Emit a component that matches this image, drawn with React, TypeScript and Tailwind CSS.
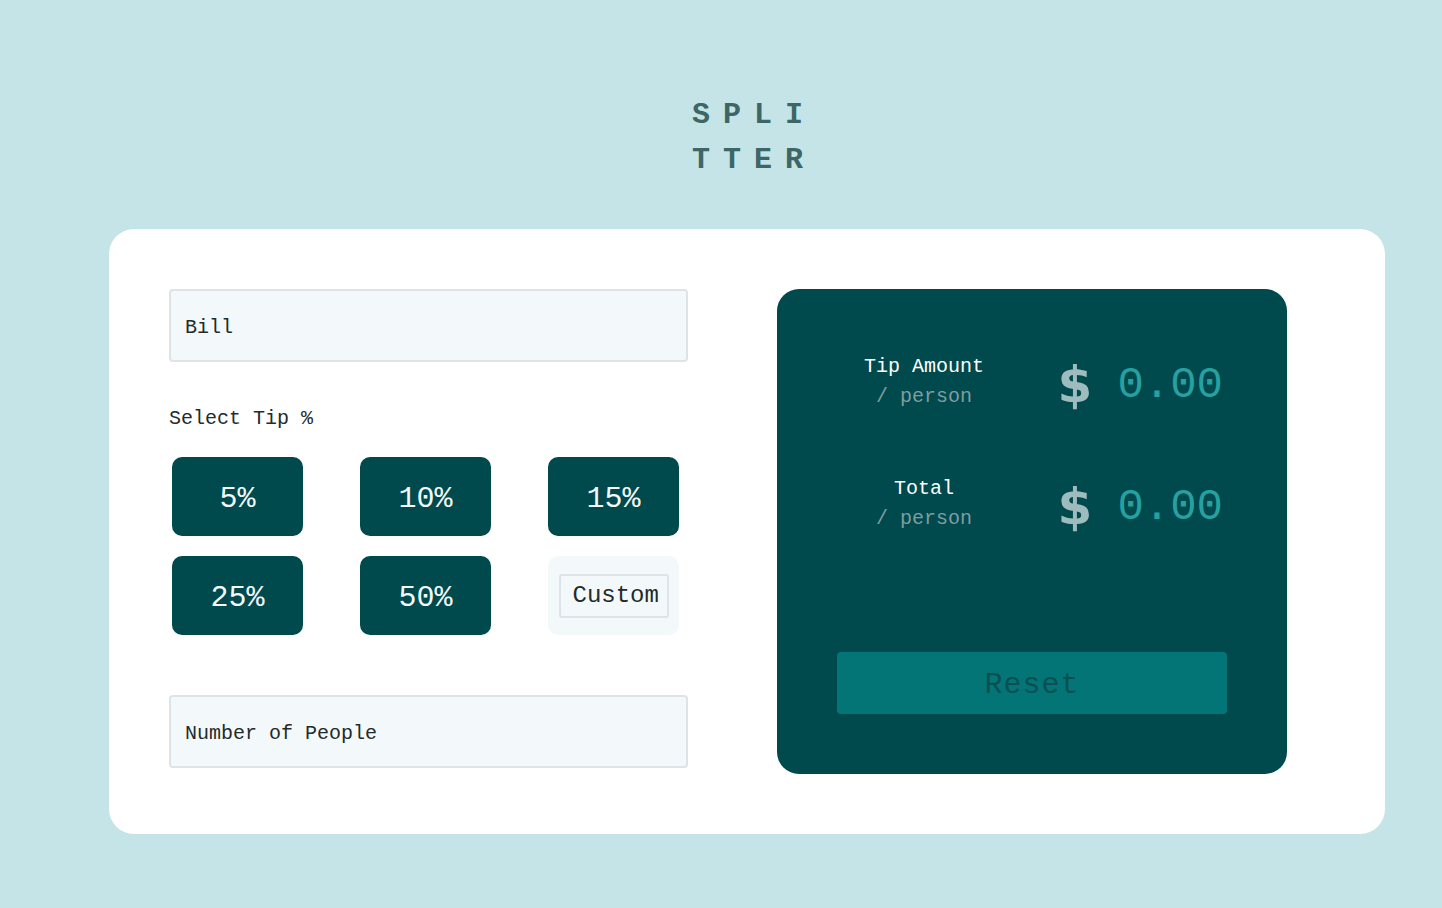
import { useState } from 'react';

const TIPS = ['5%', '10%', '15%', '25%', '50%'];

const mono = { fontFamily: '"Liberation Mono", "DejaVu Sans Mono", monospace' };

function ResultRow({ label, value }: { label: string; value: string }) {
  return (
    <div className="flex items-start">
      {/* label block, centered text */}
      <div className="mt-[2px] w-[174px] text-center leading-[30px]">
        <div className="text-[20px] text-white">{label}</div>
        <div className="text-[20px] text-[#7f9d9f]">/ person</div>
      </div>
      <div className="ml-auto mt-[10px] flex items-center">
        <span
          className="text-[50px] font-bold leading-none text-[#9ebbbd]"
          style={{ fontFamily: '"DejaVu Sans", sans-serif' }}
        >
          $
        </span>
        <span className="ml-[25px] mr-[4px] text-[44px] leading-none text-[#26a0a0]">{value}</span>
      </div>
    </div>
  );
}

export default function App() {
  const [selected, setSelected] = useState<string | null>(null);

  return (
    <div className="min-h-[908px] w-full bg-[#c5e4e7] pt-[93px]" style={mono}>
      <div className="ml-[109px] w-[1276px]">
        {/* Logo */}
        <div className="flex justify-center">
          <div className="ml-[18px] w-[128px] text-[30px] font-bold leading-[45px] tracking-[13px] text-[#3d6666]">
            <div>SPLI</div>
            <div>TTER</div>
          </div>
        </div>

        {/* Card */}
        <div className="mt-[46px] flex rounded-[25px] bg-white py-[60px] pl-[60px] pr-[98px]">
          {/* Left column */}
          <div className="flex w-[519px] flex-col">
            <div className="flex h-[73px] items-center rounded-[4px] border-2 border-[#dde3e6] bg-[#f3f9fa] px-[14px] pt-[4px] text-[20px] text-[#232b2b]">
              Bill
            </div>

            <div className="mt-[42px] text-[20px] leading-[30px] text-[#232b2b]">Select Tip %</div>

            <div className="ml-[3px] mt-[23px] grid w-[507px] grid-cols-3 gap-x-[57px] gap-y-[20px]">
              {TIPS.map((tip) => (
                <button
                  key={tip}
                  onClick={() => setSelected(tip)}
                  className={`flex h-[79px] items-center justify-center rounded-[10px] pt-[5px] text-[30px] text-[#f3f9fa] ${
                    selected === tip ? 'bg-[#26c2ae]' : 'bg-[#00494d]'
                  }`}
                >
                  {tip}
                </button>
              ))}
              <div className="flex h-[79px] items-center justify-center rounded-[10px] bg-[#f3f9fa]">
                <div className="flex h-[44px] w-[110px] items-center rounded-[3px] border-2 border-[#dde3e6] bg-[#f3f9fa] px-[12px] text-[24px] text-[#232b2b]">
                  Custom
                </div>
              </div>
            </div>

            <div className="mt-[60px] flex h-[73px] items-center rounded-[4px] border-2 border-[#dde3e6] bg-[#f3f9fa] px-[14px] pt-[4px] text-[20px] text-[#232b2b]">
              Number of People
            </div>
          </div>

          {/* Result panel */}
          <div className="ml-auto flex h-[485px] w-[510px] flex-col rounded-[22px] bg-[#00494d] px-[60px] pb-[60px] pt-[61px]">
            <div className="flex flex-col gap-[60px]">
              <ResultRow label="Tip Amount" value="0.00" />
              <ResultRow label="Total" value="0.00" />
            </div>
            <button
              onClick={() => setSelected(null)}
              className="mt-auto flex h-[62px] w-full items-center justify-center rounded-[4px] bg-[#047576] pt-[5px] text-[30px] tracking-[1px] text-[#0a4f52]"
            >
              Reset
            </button>
          </div>
        </div>
      </div>
    </div>
  );
}
